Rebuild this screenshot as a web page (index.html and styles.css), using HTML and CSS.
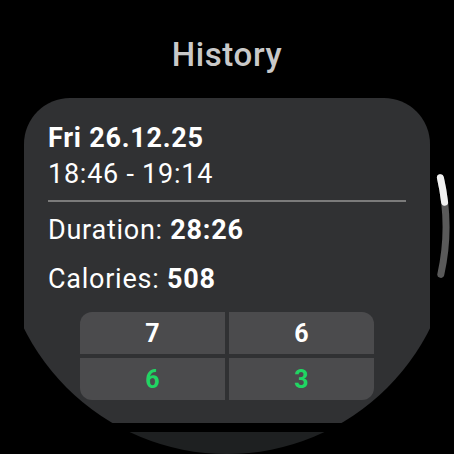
FILE: index.html
```html
<!DOCTYPE html>
<html lang="en">
<head>
    <meta charset="UTF-8">
    <meta name="viewport" content="width=device-width, initial-scale=1.0">
    <title>History</title>
    <link rel="stylesheet" href="styles.css">
</head>
<body>
    <div class="screen">
        <h1 class="title">History</h1>

        <div class="card">
            <div class="date">Fri 26.12.25</div>
            <div class="time">18:46 - 19:14</div>
            <div class="divider"></div>
            <div class="stat stat-first">Duration: <b>28:26</b></div>
            <div class="stat">Calories: <b>508</b></div>

            <div class="score-grid">
                <div class="cell">7</div>
                <div class="cell">6</div>
                <div class="cell cell-green">6</div>
                <div class="cell cell-green">3</div>
            </div>
        </div>

        <div class="card card-next"></div>

        <!-- scroll position indicator -->
        <svg class="scrollbar" width="454" height="454" viewBox="0 0 454 454">
            <path class="track" d="M440.4 177.7 A219 219 0 0 1 440.8 274.4"/>
            <path class="thumb" d="M440.4 177.7 A219 219 0 0 1 444.6 202.2"/>
        </svg>
    </div>
</body>
</html>
```

FILE: styles.css
```css
* {
    margin: 0;
    padding: 0;
    box-sizing: border-box;
    font-family: Roboto, "Liberation Sans", sans-serif;
}

body {
    background-color: #000;
}

.screen {
    position: relative;
    width: 454px;
    height: 454px;
    border-radius: 50%;
    overflow: hidden;
    background-color: #000;
    padding-top: 35px;
}

.title {
    text-align: center;
    color: #c9c9c9;
    font-size: 33px;
    font-weight: 500;
    line-height: 40px;
    letter-spacing: 0.6px;
}

.card {
    margin: 23px 24px 0;
    background-color: #303133;
    border-radius: 46px;
    padding: 24px 24px 23px;
    color: #fff;
}

.date,
.time,
.stat {
    font-size: 27px;
    line-height: 32px;
    letter-spacing: 0.75px;
}

.date {
    font-weight: bold;
}

.time {
    margin-top: 4px;
}

.divider {
    height: 2px;
    margin-top: 10px;
    background-color: #7b7b7b;
}

.stat {
    margin-top: 17px;
}

.stat-first {
    margin-top: 12px;
}

.score-grid {
    display: grid;
    grid-template-columns: 1fr 1fr;
    gap: 4px;
    width: 294px;
    margin: 17px auto 0;
    border-radius: 12px;
    overflow: hidden;
}

.cell {
    height: 42px;
    display: flex;
    align-items: center;
    justify-content: center;
    background-color: #4b4b4d;
    font-size: 25px;
    font-weight: bold;
}

.cell-green {
    color: #1fd663;
}

.card-next {
    margin-top: 9px;
    height: 120px;
    background-color: #1e2021;
}

.scrollbar {
    position: absolute;
    top: 0;
    left: 0;
}

.scrollbar path {
    fill: none;
    stroke-width: 7;
    stroke-linecap: round;
}

.track {
    stroke: #5a5a5a;
}

.thumb {
    stroke: #f2f2f2;
}
```
